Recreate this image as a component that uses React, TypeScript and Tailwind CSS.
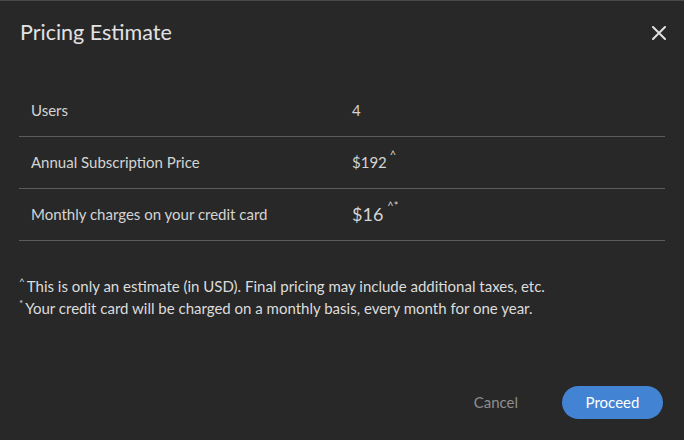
import React from "react";

export default function App() {
  const font = { fontFamily: "Lato, 'Open Sans', sans-serif" };
  return (
    <div className="w-[684px] h-[440px] bg-[#282828] border-t border-[#4a4a4a] relative text-[#d4d4d4]" style={font}>
      <div className="flex items-center justify-between pl-[20px] pr-[18px] pt-[18px]">
        <h1 className="text-[21.5px] leading-[27px] text-[#e2e2e2]">Pricing Estimate</h1>
        <svg width="14" height="14" viewBox="0 0 14 14" className="mt-[1px]">
          <path d="M1 1L13 13M13 1L1 13" stroke="#e0e0e0" strokeWidth="2" strokeLinecap="round" />
        </svg>
      </div>
      <div className="mx-[19px] mt-[39px]">
        <div className="flex items-center h-[52px] border-b border-[#5c5c5c] text-[15px]">
          <div className="w-[333px] pl-[12px]">Users</div>
          <div>4</div>
        </div>
        <div className="flex items-center h-[52px] border-b border-[#5c5c5c] text-[15px]">
          <div className="w-[333px] pl-[12px]">Annual Subscription Price</div>
          <div className="flex items-start">
            <span>$192</span>
            <span className="text-[11px] leading-none ml-[3px] -mt-[2px]">^</span>
          </div>
        </div>
        <div className="flex items-center h-[52px] border-b border-[#5c5c5c] text-[15px]">
          <div className="w-[333px] pl-[12px]">Monthly charges on your credit card</div>
          <div className="flex items-start">
            <span className="text-[18px]">$16</span>
            <span className="text-[11px] leading-none ml-[4px] -mt-[1px]">^*</span>
          </div>
        </div>
      </div>
      <div className="pl-[19px] mt-[34px] text-[15px] leading-[22px] text-[#dcdcdc]">
        <div className="flex items-start">
          <span className="text-[10px] leading-none mt-[1px] mr-[2px]">^</span>
          <span>This is only an estimate (in USD). Final pricing may include additional taxes, etc.</span>
        </div>
        <div className="flex items-start">
          <span className="text-[10px] leading-none mt-[1px] mr-[2px]">*</span>
          <span>Your credit card will be charged on a monthly basis, every month for one year.</span>
        </div>
      </div>
      <div className="absolute right-[21px] bottom-[21px] flex items-center gap-[44px]">
        <button className="text-[15px] text-[#8e8e8e]">Cancel</button>
        <button className="h-[33px] w-[101px] rounded-full bg-[#4283d3] text-white text-[15px]">Proceed</button>
      </div>
    </div>
  );
}
